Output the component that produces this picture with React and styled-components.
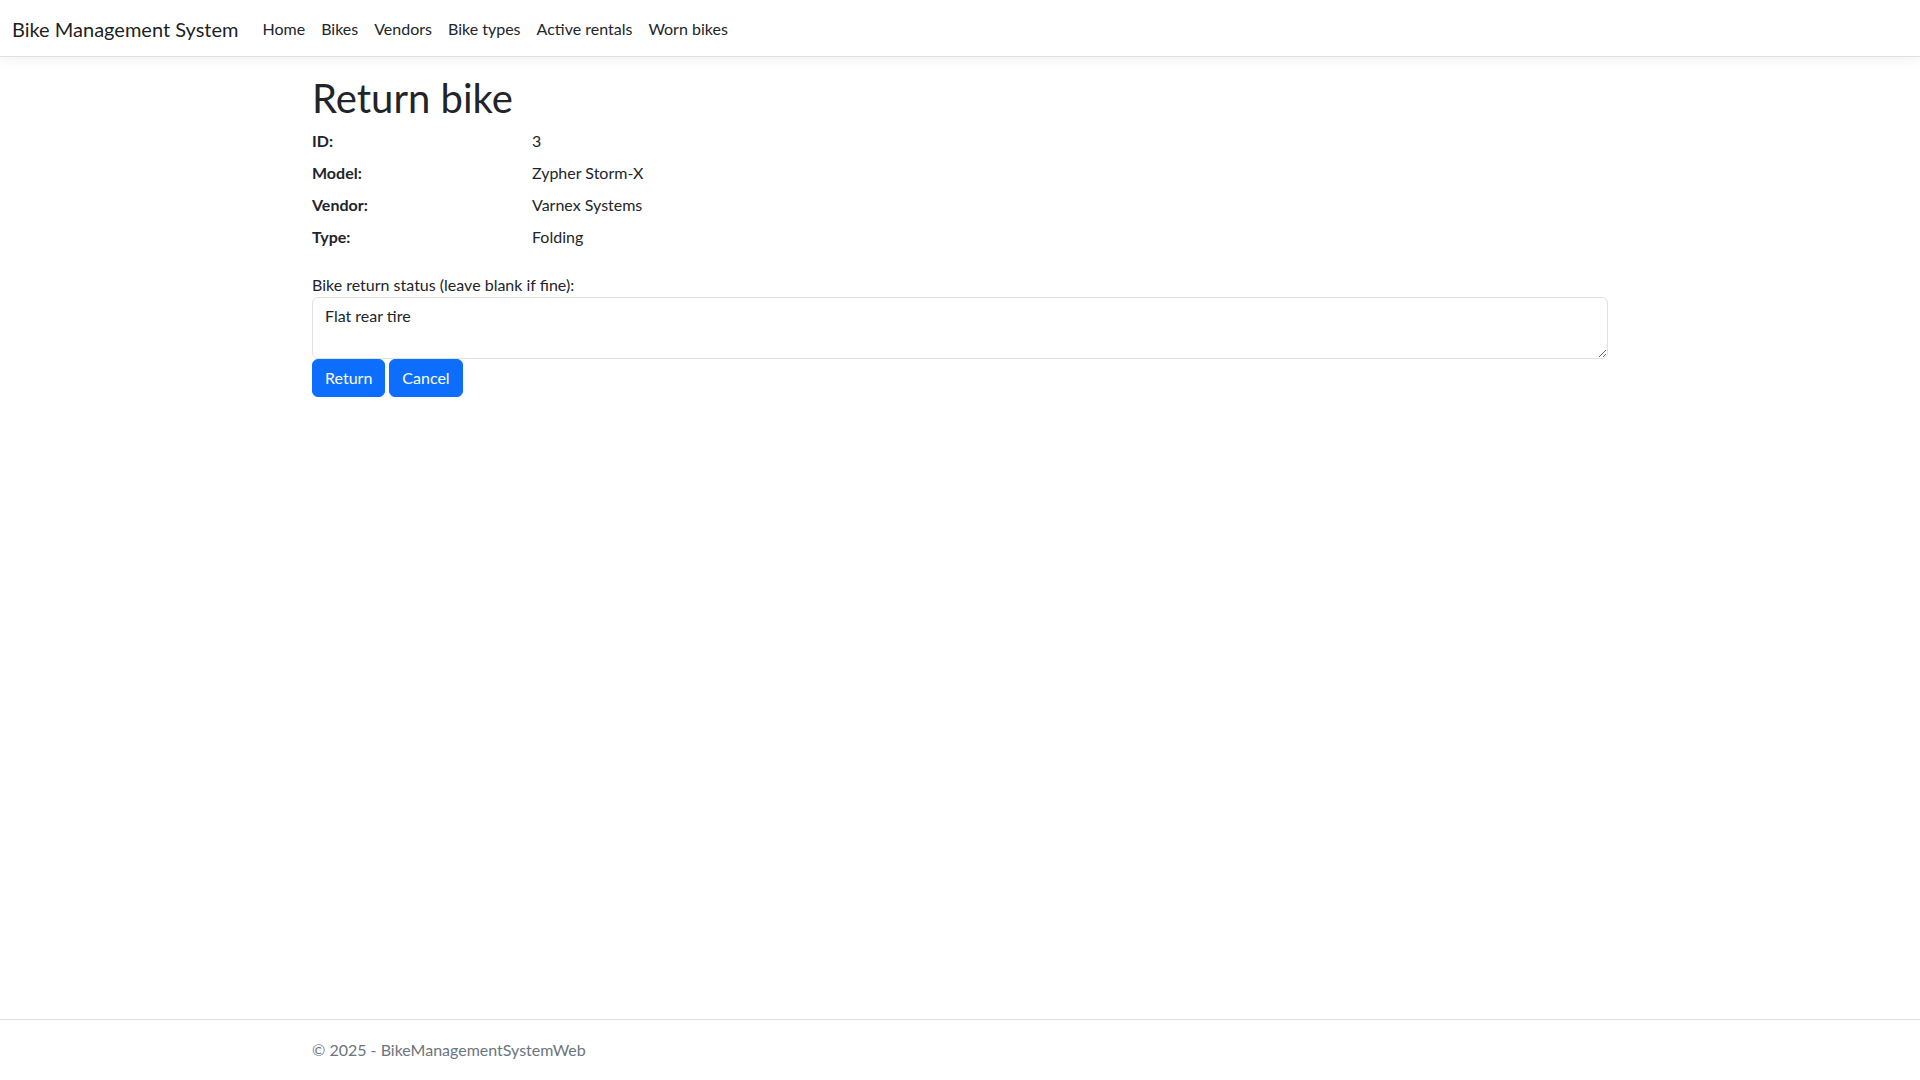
import React from "react";
import styled, { createGlobalStyle } from "styled-components";

const GlobalStyle = createGlobalStyle`
  *, *::before, *::after { box-sizing: border-box; }
  html, body { margin: 0; padding: 0; }
  body {
    font-family: "Segoe UI", Lato, "Open Sans", sans-serif;
    font-size: 16px;
    line-height: 1.5;
    color: #212529;
    background: #fff;
  }
`;

const Page = styled.div`
  min-height: 100vh;
  display: flex;
  flex-direction: column;
`;

const NavBar = styled.nav`
  display: flex;
  align-items: center;
  padding: 8px 12px;
  background: #fff;
  border-bottom: 1px solid #dee2e6;
  box-shadow: 0 4px 12px rgba(0, 0, 0, 0.05);
  margin-bottom: 16px;
`;

const Brand = styled.a`
  font-size: 20px;
  line-height: 30px;
  padding: 6px 0 4px;
  margin-right: 16px;
  color: rgba(0, 0, 0, 0.9);
  text-decoration: none;
  white-space: nowrap;
`;

const NavList = styled.ul`
  display: flex;
  list-style: none;
  margin: 0;
  padding: 0;
`;

const NavLink = styled.a`
  display: block;
  padding: 9px 8px 7px;
  color: #212529;
  text-decoration: none;
`;

const Container = styled.div`
  width: 100%;
  max-width: 1320px;
  margin: 0 auto;
  padding: 0 12px;
`;

const Main = styled.main`
  padding-bottom: 16px;
`;

const Title = styled.h1`
  font-size: 40px;
  font-weight: 400;
  line-height: 1.2;
  margin: 0 0 8px;
  padding-top: 1px;
  height: 48px;
`;

const Details = styled.dl`
  display: grid;
  grid-template-columns: 220px 1fr;
  margin: 0 0 16px;
`;

const Term = styled.dt`
  font-weight: 700;
  margin-bottom: 8px;
`;

const Desc = styled.dd`
  margin: 0 0 8px;
`;

const Label = styled.label`
  display: inline-block;
`;

const TextArea = styled.textarea`
  display: block;
  width: 100%;
  padding: 6px 12px;
  font: inherit;
  font-size: 16px;
  line-height: 1.5;
  color: #212529;
  background: #fff;
  border: 1px solid #dee2e6;
  border-radius: 6px;
  resize: vertical;
  outline: none;
`;

const Actions = styled.div`
  display: flex;
  gap: 4px;
`;

const Button = styled.button`
  font: inherit;
  font-size: 16px;
  line-height: 1.5;
  padding: 6px 12px;
  color: #fff;
  background: #0d6efd;
  border: 1px solid #0d6efd;
  border-radius: 6px;
  cursor: pointer;
`;

const Footer = styled.footer`
  margin-top: auto;
  border-top: 1px solid #dee2e6;
  line-height: 60px;
  color: #6c757d;
  white-space: nowrap;
`;

const links = ["Home", "Bikes", "Vendors", "Bike types", "Active rentals", "Worn bikes"];

const bike = [
  ["ID:", "3"],
  ["Model:", "Zypher Storm-X"],
  ["Vendor:", "Varnex Systems"],
  ["Type:", "Folding"],
];

export default function App() {
  return (
    <>
      <GlobalStyle />
      <Page>
        <NavBar>
          <Brand href="#">Bike Management System</Brand>
          <NavList>
            {links.map(l => (
              <li key={l}>
                <NavLink href="#">{l}</NavLink>
              </li>
            ))}
          </NavList>
        </NavBar>
        <Container>
          <Main>
            <Title>Return bike</Title>
            <Details>
              {bike.map(([k, v]) => (
                <React.Fragment key={k}>
                  <Term>{k}</Term>
                  <Desc>{v}</Desc>
                </React.Fragment>
              ))}
            </Details>
            <Label htmlFor="status">Bike return status (leave blank if fine):</Label>
            <TextArea id="status" rows={2} defaultValue="Flat rear tire" />
            <Actions>
              <Button>Return</Button>
              <Button>Cancel</Button>
            </Actions>
          </Main>
        </Container>
        <Footer>
          <Container>&copy; 2025 - BikeManagementSystemWeb</Container>
        </Footer>
      </Page>
    </>
  );
}
